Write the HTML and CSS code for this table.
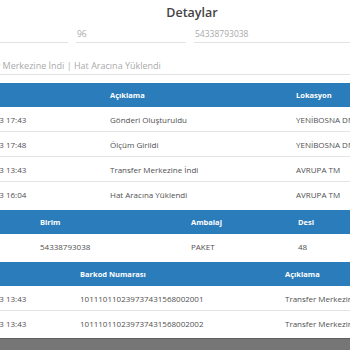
FILE: index.html
```html
<!DOCTYPE html>
<html>
<head>
<meta charset="utf-8">
<link rel="stylesheet" href="styles.css">
</head>
<body>
<div class="page">
  <h2 class="title">Detaylar</h2>
  <div class="fields">
    <div class="field f1">Kargo</div>
    <div class="field f2">96</div>
    <div class="field f3">54338793038</div>
  </div>
  <div class="field wide">Transfer Merkezine İndi | Hat Aracına Yüklendi</div>

  <table class="grid t1">
    <colgroup><col class="c142"><col class="c186"><col></colgroup>
    <thead><tr><th>Tarih</th><th>Açıklama</th><th>Lokasyon</th></tr></thead>
    <tbody>
      <tr><td class="date">11.10.2023 17:43</td><td>Gönderi Oluşturuldu</td><td>YENİBOSNA DM</td></tr>
      <tr><td class="date">11.10.2023 17:48</td><td>Ölçüm Girildi</td><td>YENİBOSNA DM</td></tr>
      <tr><td class="date">12.10.2023 13:43</td><td>Transfer Merkezine İndi</td><td>AVRUPA TM</td></tr>
      <tr><td class="date">12.10.2023 16:04</td><td>Hat Aracına Yüklendi</td><td>AVRUPA TM</td></tr>
    </tbody>
  </table>

  <table class="grid t2">
    <colgroup><col class="c72"><col class="c151"><col class="c107"><col></colgroup>
    <thead><tr><th></th><th>Birim</th><th>Ambalaj</th><th>Desi</th></tr></thead>
    <tbody>
      <tr><td></td><td>54338793038</td><td>PAKET</td><td>48</td></tr>
    </tbody>
  </table>

  <table class="grid t3">
    <colgroup><col class="c112"><col class="c205"><col></colgroup>
    <thead><tr><th>Tarih</th><th>Barkod Numarası</th><th>Açıklama</th></tr></thead>
    <tbody>
      <tr><td class="date">12.10.2023 13:43</td><td>101110110239737431568002001</td><td>Transfer Merkezine İndi</td></tr>
      <tr><td class="date">12.10.2023 13:43</td><td>101110110239737431568002002</td><td>Transfer Merkezine İndi</td></tr>
    </tbody>
  </table>
</div>
<div class="footer"></div>
</body>
</html>
```

FILE: styles.css
```css
html, body {
  margin: 0;
  padding: 0;
  background: #fff;
  overflow: hidden;
  width: 350px;
  height: 350px;
}
body {
  font-family: "Open Sans", "DejaVu Sans", sans-serif;
  color: #555;
  display: flex;
  flex-direction: column;
}
.page {
  width: 464px;
  margin-left: -40px;
  flex: 0 0 auto;
}
.title {
  margin: 0;
  height: 26px;
  line-height: 26px;
  text-align: center;
  font-size: 12.5px;
  font-weight: 600;
  color: #444;
}
.fields {
  display: flex;
  gap: 8px;
}
.field {
  height: 16px;
  line-height: 16px;
  border-bottom: 1px solid #e2e2e2;
  font-size: 8.5px;
  color: #aaa;
  white-space: nowrap;
  overflow: hidden;
}
.f1 { width: 108px; color: transparent; }
.f2 { width: 109px; padding-left: 1px; }
.f3 { flex: 1; padding-left: 1px; }
.wide {
  margin-top: 15px;
  padding-left: 5px;
  font-size: 9px;
}
.grid {
  width: 464px;
  table-layout: fixed;
  border-collapse: collapse;
  font-size: 8px;
  margin-top: 4px;
}
.t1 { margin-top: 8px; }
.c142 { width: 142px; }
.c186 { width: 186px; }
.c72 { width: 72px; }
.c151 { width: 151px; }
.c107 { width: 107px; }
.c112 { width: 112px; }
.c205 { width: 205px; }
.grid th {
  background: #2b7cba;
  color: #fff;
  font-weight: 700;
  font-size: 7.5px;
  text-align: left;
  height: 24px;
  padding: 0 0 0 8px;
  white-space: nowrap;
}
.grid td {
  height: 24px;
  padding: 0 0 0 8px;
  border-top: 1px solid #e4e4e4;
  color: #505050;
  white-space: nowrap;
  overflow: hidden;
}
.grid tbody tr:first-child td { border-top: none; }
.grid td.date { padding-left: 3px; }
.footer {
  margin-top: auto;
  height: 11px;
  background: #767676;
  border-top: 1px solid #5e5e5e;
}
```
